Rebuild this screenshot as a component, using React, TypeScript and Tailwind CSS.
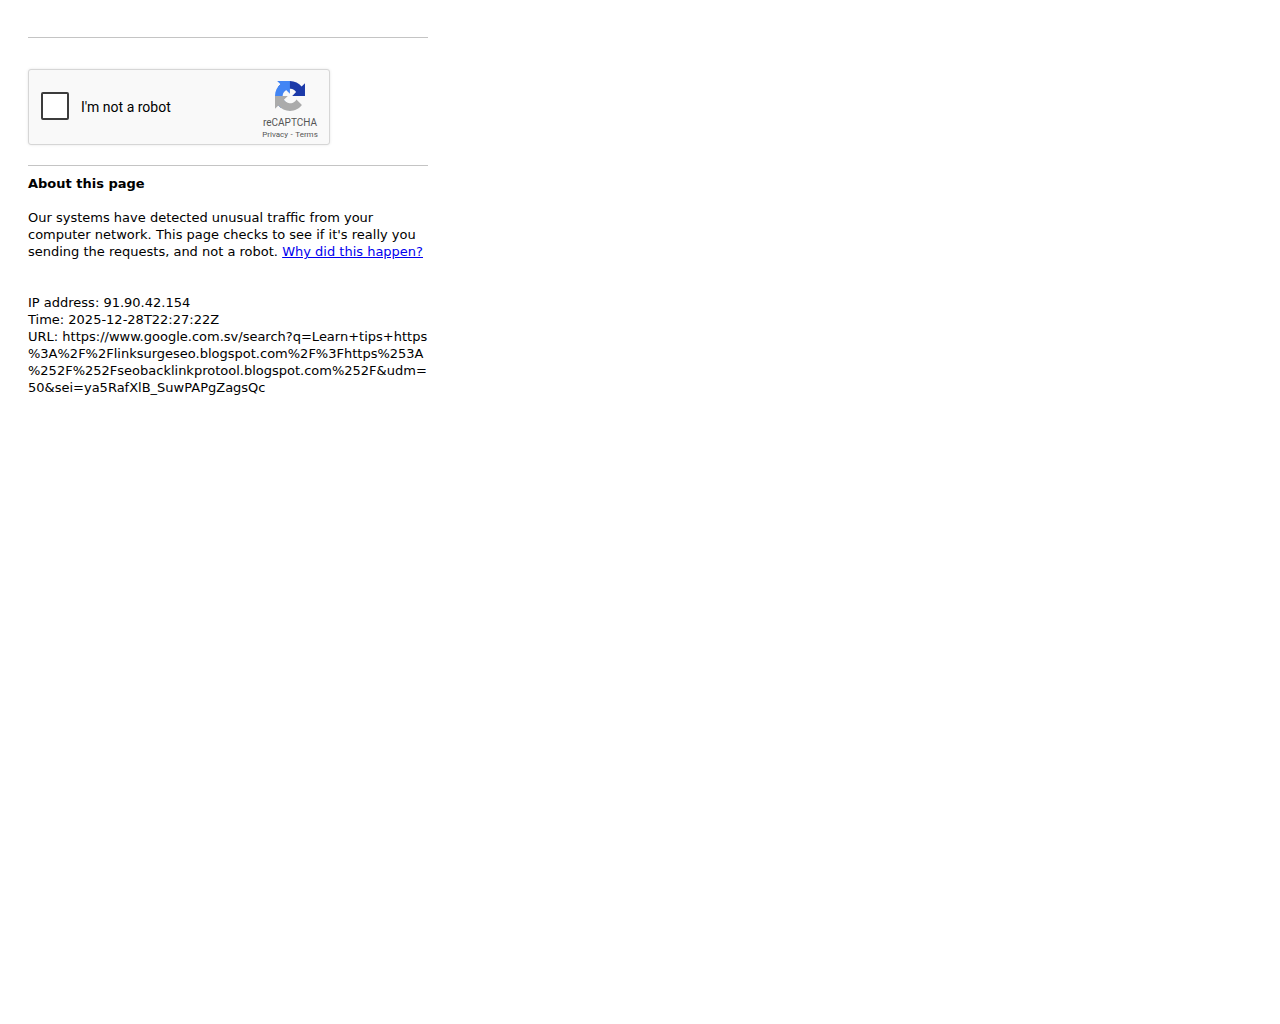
export default function App() {
  return (
    <div className="min-h-screen bg-white pt-[37px] pl-[28px] font-['DejaVu_Sans',sans-serif] text-[13px] leading-[17px] text-black">
      <div className="w-[400px]">
        <div className="h-px bg-[#c4c4c4]" />

        <div className="mt-[31px] flex h-[76px] w-[302px] items-center rounded-[3px] border border-[#d6d6d6] bg-[#f9f9f9] shadow-[0_0_3px_rgba(0,0,0,0.1)]">
          <div className="ml-[12px] h-[28px] w-[28px] -translate-y-px rounded-[2px] border-2 border-[#3c3c3c] bg-white" />
          <span className="ml-[12px] font-['Roboto',sans-serif] text-[14px] text-black">
            I'm not a robot
          </span>
          <div className="ml-auto mr-[10px] flex w-[58px] flex-col items-center self-start pt-[11px] font-['Roboto',sans-serif] text-[#555]">
            <svg width="30" height="30" viewBox="0 0 64 64">
              <path
                fill="#1c3aa9"
                d="M64 31.955l-.033-1.37V4.687l-7.16 7.16C50.948 4.674 42.033.093 32.05.093c-10.4 0-19.622 4.96-25.458 12.64l11.736 11.86a15.55 15.55 0 0 1 4.754-5.334c2.05-1.6 4.952-2.906 8.968-2.906.485 0 .86.057 1.135.163 4.976.393 9.288 3.14 11.828 7.124l-8.307 8.307L64 31.953"
              />
              <path
                fill="#4285f4"
                d="M31.862 0l-1.37.033H4.594l7.16 7.16C4.58 13.052 0 21.967 0 31.95c0 10.4 4.96 19.622 12.64 25.458L24.5 45.672a15.55 15.55 0 0 1-5.334-4.754c-1.6-2.05-2.906-4.952-2.906-8.968 0-.485.057-.86.163-1.135.393-4.976 3.14-9.288 7.124-11.828l8.307 8.307L31.86 0"
              />
              <path
                fill="#ababab"
                d="M0 31.95l.033 1.37v25.898l7.16-7.16c5.86 7.173 14.774 11.754 24.76 11.754 10.4 0 19.622-4.96 25.458-12.64l-11.736-11.86a15.55 15.55 0 0 1-4.754 5.334c-2.05 1.6-4.952 2.906-8.968 2.906-.485 0-.86-.057-1.135-.163-4.976-.393-9.288-3.14-11.828-7.124l8.307-8.307C18.3 31.95 6.1 31.95 0 31.95"
              />
            </svg>
            <div className="mt-[5px] whitespace-nowrap text-[10px] leading-[14px]">reCAPTCHA</div>
            <div className="whitespace-nowrap text-[8px] leading-[10px]">
              Privacy<span className="mx-[2.5px]">-</span>Terms
            </div>
          </div>
        </div>

        <div className="mt-[20px] h-px bg-[#c4c4c4]" />

        <div className="mt-[9px] font-bold">About this page</div>

        <p className="mt-[17px]">
          Our systems have detected unusual traffic from your computer network. This page checks to
          see if it's really you sending the requests, and not a robot.{" "}
          <a href="#" className="text-[#0000ee] underline">
            Why did this happen?
          </a>
        </p>

        <div className="mt-[34px] whitespace-nowrap">
          <div>IP address: 91.90.42.154</div>
          <div>Time: 2025-12-28T22:27:22Z</div>
          <div>
            URL: https://www.google.com.sv/search?q=Learn+tips+https
            <br />
            %3A%2F%2Flinksurgeseo.blogspot.com%2F%3Fhttps%253A
            <br />
            %252F%252Fseobacklinkprotool.blogspot.com%252F&udm=
            <br />
            50&sei=ya5RafXlB_SuwPAPgZagsQc
          </div>
        </div>
      </div>
    </div>
  );
}
